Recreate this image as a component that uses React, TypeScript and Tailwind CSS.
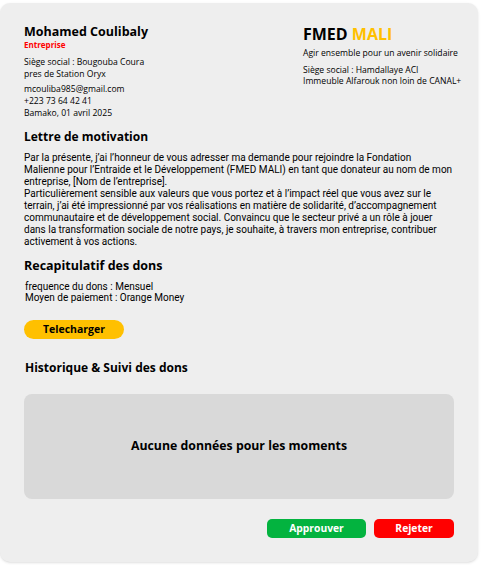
import React from "react";

const head = { fontFamily: '"Open Sans", "DejaVu Sans", sans-serif' };
const body = { fontFamily: 'Roboto, "Liberation Sans", sans-serif' };

export default function App() {
  return (
    <div className="bg-white w-[483px] h-[565px] pt-[3px]" style={head}>
      <div className="w-[478px] h-[559px] bg-[#eeeeee] rounded-[10px] shadow-sm px-6 pt-[21px] text-black">
        {/* Header */}
        <div className="flex">
          <div className="flex-1">
            <h1 className="text-[12.5px] font-bold leading-[16px]">Mohamed Coulibaly</h1>
            <p className="text-[8px] font-bold text-[#ff0000] leading-[10px]">Entreprise</p>
            <div className="mt-[6px] text-[8.6px] leading-[12px]">
              <p>Siège social : Bougouba Coura</p>
              <p>pres de Station Oryx</p>
            </div>
            <div className="mt-[3px] text-[8.6px] leading-[12px]">
              <p>mcouliba985@gmail.com</p>
              <p>+223 73 64 42 41</p>
              <p>Bamako, 01 avril 2025</p>
            </div>
          </div>
          <div className="w-[151px] whitespace-nowrap">
            <h2 className="text-[16px] font-bold leading-[20px]">
              FMED <span className="text-[#ffc000]">MALI</span>
            </h2>
            <p className="mt-[3px] text-[8.6px] leading-[12px]">Agir ensemble pour un avenir solidaire</p>
            <div className="mt-[6px] text-[8.6px] leading-[11px]">
              <p>Siège social : Hamdallaye ACI</p>
              <p>Immeuble Alfarouk non loin de CANAL+</p>
            </div>
          </div>
        </div>

        {/* Lettre */}
        <h3 className="mt-[9px] text-[12px] font-bold leading-[18px]">Lettre de motivation</h3>
        <p className="mt-[6px] text-[10px] leading-[12px]" style={body}>
          Par la présente, j’ai l’honneur de vous adresser ma demande pour rejoindre la Fondation
          <br />
          Malienne pour l’Entraide et le Développement (FMED MALI) en tant que donateur au nom de mon entreprise, [Nom de l’entreprise].
          <br />
          Particulièrement sensible aux valeurs que vous portez et à l’impact réel que vous avez sur le terrain, j’ai été impressionné par vos réalisations en matière de solidarité, d’accompagnement communautaire et de développement social. Convaincu que le secteur privé a un rôle à jouer dans la transformation sociale de notre pays, je souhaite, à travers mon entreprise, contribuer activement à vos actions.
        </p>

        {/* Recap */}
        <h3 className="mt-[9px] text-[12.5px] font-bold leading-[18px]">Recapitulatif des dons</h3>
        <div className="mt-[6px] pl-[1px] text-[10px] leading-[11px]" style={body}>
          <p>frequence du dons : Mensuel</p>
          <p>Moyen de paiement : Orange Money</p>
        </div>
        <button className="block mt-[17px] w-[100px] h-[19px] rounded-full bg-[#ffc000] text-[10.5px] font-bold leading-[19px]">
          Telecharger
        </button>

        {/* Historique */}
        <h3 className="mt-[20px] pl-[1px] text-[12px] font-bold leading-[18px]">Historique &amp; Suivi des dons</h3>
        <div className="mt-[17px] h-[105px] rounded-[8px] bg-[#d9d9d9] flex items-center justify-center">
          <p className="text-[12.3px] font-bold">Aucune données pour les moments</p>
        </div>

        <div className="mt-[20px] flex justify-end gap-[8px]">
          <button className="w-[99px] h-[19px] rounded-[5px] bg-[#03b33f] text-white text-[10.3px] font-bold leading-[19px]">
            Approuver
          </button>
          <button className="w-[80px] h-[19px] rounded-[5px] bg-[#ff0000] text-white text-[10.3px] font-bold leading-[19px]">
            Rejeter
          </button>
        </div>
      </div>
    </div>
  );
}
